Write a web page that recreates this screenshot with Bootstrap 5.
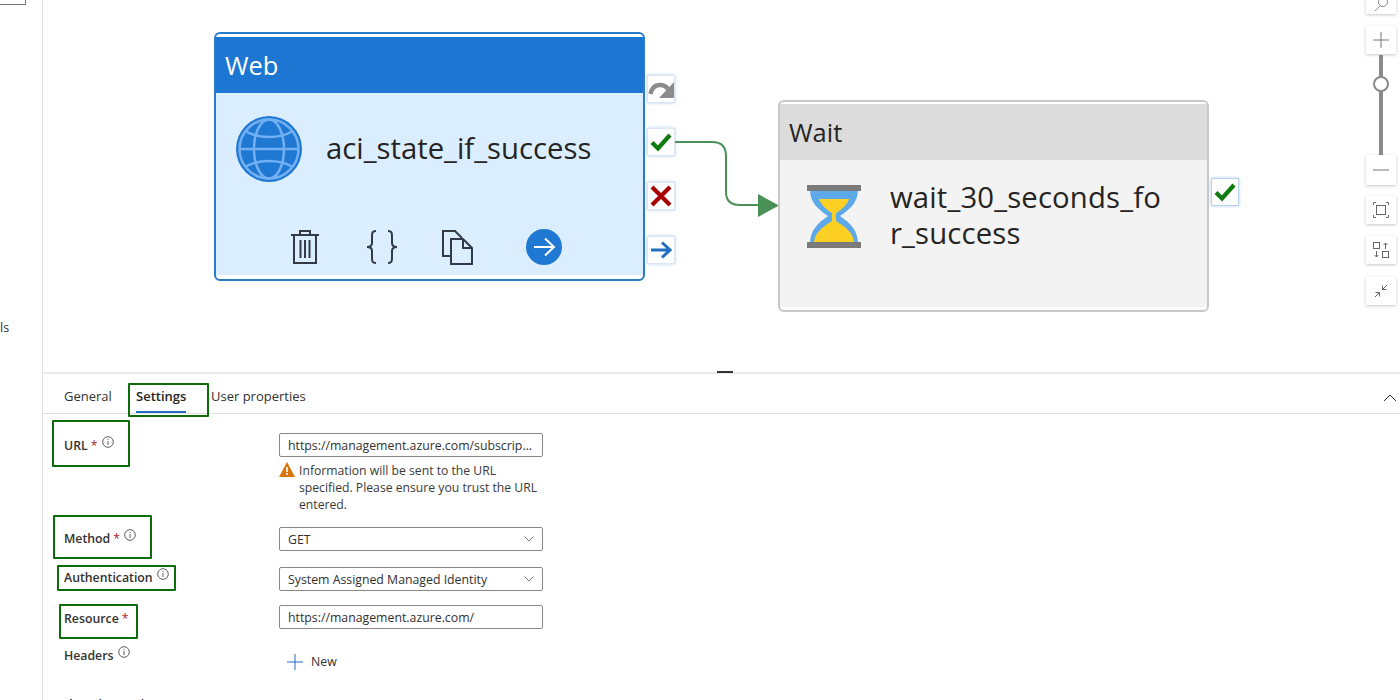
<!DOCTYPE html>
<html lang="en">
<head>
<meta charset="UTF-8">
<meta name="viewport" content="width=device-width, initial-scale=1.0">
<link rel="stylesheet" href="https://cdn.jsdelivr.net/npm/bootstrap@5.3.3/dist/css/bootstrap.min.css">
<script src="https://cdn.jsdelivr.net/npm/bootstrap@5.3.3/dist/js/bootstrap.bundle.min.js" defer></script>
<title>Pipeline editor</title>
<style>
  html, body { height: 700px; overflow: hidden; }
  body { font-family: "Open Sans", "Noto Sans", sans-serif; color: #323130; background: #fff; }

  /* left rail */
  .rail { width: 43px; flex: none; border-right: 1px solid #e1e1e1; }
  .rail-box { width: 26px; height: 6px; margin-top: -1px; border: 1px solid #777; border-left: 0; border-top: 0; }
  .rail-text { margin-top: 315px; font-size: 12.5px; line-height: 16px; }

  /* canvas */
  .canvas { height: 374px; flex: none; border-bottom: 2px solid #e9e9e9; }
  .node { position: absolute; padding: 3px 0 3px; background: #fff; }
  .node-web { left: 171px; top: 32px; width: 431px; height: 249px; border: 2px solid #2a7cc7; border-radius: 6px; }
  .node-wait { left: 735px; top: 100px; width: 431px; height: 212px; padding-top: 2px; border: 2px solid #c8c8c8; border-radius: 6px; }
  .node-head { height: 56px; padding-left: 9px; font-size: 25.5px; line-height: 56px; }
  .node-web .node-head { background: #1d77d2; color: #fff; }
  .node-wait .node-head { background: #dcdcdc; color: #252423; }
  .node-body { position: relative; }
  .node-web .node-body { height: 182px; background: #dbeeff; }
  .node-wait .node-body { height: 147px; background: #f3f3f3; }
  .node-title { color: #252423; font-size: 29.3px; line-height: 36px; }
  .web-main { padding: 23px 0 0 20px; gap: 24px; height: 113px; }
  .web-title { margin-top: 14px; }
  .web-actions { padding-top: 23px; padding-left: 74px; }
  .web-actions svg { display: block; }
  .action-trash { width: 76px; }
  .action-braces { width: 75px; }
  .action-copy { width: 85px; }
  .wait-main { padding: 16px 0 0 27px; gap: 29px; }
  .wait-glass { flex: none; margin-top: 9px; }
  .wait-title { width: 278px; margin-top: 3px; letter-spacing: .15px; overflow-wrap: anywhere; }

  .port { position: absolute; width: 28px; height: 28px; background: #fff; border: 1px solid #dbe6f2; box-shadow: 0 0 3px rgba(120,160,210,.55); }
  .port-skip { left: 604px; top: 75px; }
  .port-ok { left: 604px; top: 128px; }
  .port-fail { left: 604px; top: 182px; }
  .port-done { left: 604px; top: 236px; }
  .port-wait { left: 1168px; top: 178px; border-color: #b9d4f1; }

  .wire { position: absolute; left: 632px; top: 135px; }

  /* zoom toolbar */
  .tool { position: absolute; left: 1323px; width: 30px; background: #fff; box-shadow: 0 1px 3px rgba(0,0,0,.22); }
  .tool-find { top: -16px; height: 30px; }
  .tool-plus { top: 26px; height: 28px; }
  .tool-minus { top: 155px; height: 30px; }
  .tool-fit { top: 196px; height: 28px; }
  .tool-arrange { top: 236px; height: 28px; }
  .tool-collapse { top: 277px; height: 28px; }
  .zoom-track { position: absolute; left: 1336px; top: 55px; width: 4px; height: 100px; background: #8a8a8a; }
  .zoom-knob { position: absolute; left: 1330px; top: 76px; width: 16px; height: 16px; border-radius: 50%; background: #fff; border: 2px solid #8a8a8a; }
  .resize-grip { position: absolute; left: 674px; top: 371px; width: 16px; height: 2px; background: #333; }

  /* bottom panel */
  .panel-tabs { height: 40px; padding-left: 21px; border-bottom: 1px solid #e1e1e1; font-size: 13px; }
  .panel-tabs .nav-link { padding: 4px 0 0; color: #323130; line-height: 36px; height: 39px; }
  .panel-tabs .nav-link.active { color: #252423; font-weight: 600; border-bottom: 2px solid #1f6fbf; }
  .tab-general { width: 72px; }
  .tab-settings { width: 75px; }
  .tab-holder { position: relative; }
  .panel-close { margin-left: auto; margin-right: 3px; padding-top: 13px; }

  .form-area { padding-left: 21px; font-size: 12.3px; }
  .field-row { display: flex; }
  .field-label { position: relative; width: 215px; flex: none; font-weight: 600; color: #323130; font-size: 12.3px; }
  .field-main { width: 264px; flex: none; }
  .field-main .form-control, .field-main .form-select { height: 24px; min-height: 24px; padding: 0 8px; border: 1px solid #8a8886; border-radius: 2px; font-size: 12.3px; line-height: 22px; color: #323130; text-overflow: ellipsis; }
  .field-main .form-select { padding-top: 1px; background-position: right 8px center; background-size: 10px 6px; background-image: url("data:image/svg+xml,%3csvg xmlns='http://www.w3.org/2000/svg' viewBox='0 0 10 6'%3e%3cpath fill='none' stroke='%23807e7c' d='M.5.5L5 5 9.500.5'/%3e%3c/svg%3e"); }
  .row-url { margin-top: 19px; height: 94px; }
  .row-method { height: 40px; }
  .row-auth { height: 38px; }
  .row-resource { height: 40px; }
  .label-url { padding-top: 3px; }
  .label-method { padding-top: 2px; }
  .label-auth { padding-top: 1px; }
  .label-resource { padding-top: 5px; }
  .label-headers { padding-top: 1px; }
  .req { color: #a4262c; margin-left: 3px; font-weight: 400; }
  .info-dot { display: inline-block; vertical-align: 2px; margin-left: 1px; }

  .warn-note { gap: 4px; margin-top: 5px; font-size: 12.2px; line-height: 17px; color: #3b3a39; }
  .warn-note svg { flex: none; margin-top: 0; }

  .new-btn { padding: 8px 0 0 8px; gap: 8px; font-size: 12.3px; color: #323130; }
  .adv-row { margin-top: 25px; padding-left: 3px; gap: 11px; font-weight: 600; line-height: 17px; }
  .adv-row svg { margin-top: 2px; }

  /* green annotation boxes */
  .callout { position: absolute; border: 2px solid #0b6e0b; border-radius: 1px; pointer-events: none; }
  .callout-tab { left: -8px; top: 9px; width: 81px; height: 34px; }
  .callout-url { left: -12px; top: -13px; width: 78px; height: 47px; }
  .callout-method { left: -11px; top: -12px; width: 99px; height: 44px; }
  .callout-auth { left: -7px; top: -2px; width: 119px; height: 26px; }
  .callout-resource { left: -5px; top: -1px; width: 79px; height: 35px; }
</style>
</head>
<body>
<div class="d-flex">
  <!-- left rail -->
  <div class="rail overflow-hidden">
    <div class="rail-box"></div>
    <div class="rail-text">ls</div>
  </div>

  <div class="flex-grow-1">
    <!-- pipeline canvas -->
    <div class="canvas position-relative">
      <div class="node node-web">
        <div class="node-head">Web</div>
        <div class="node-body">
          <div class="web-main d-flex align-items-start">
            <svg width="66" height="66" viewBox="0 0 66 66" fill="none" stroke="#72b0f3" stroke-width="2.500">
              <circle cx="33" cy="33" r="33" fill="#1f78d1" stroke="none"/>
              <circle cx="33" cy="33" r="29.500"/>
              <ellipse cx="33" cy="33" rx="15" ry="29.500"/>
              <path d="M3 33h60M9 15c14 8 34 8 48 0M9 51c14-8 34-8 48 0"/>
            </svg>
            <div class="node-title web-title">aci_state_if_success</div>
          </div>
          <div class="web-actions d-flex">
            <div class="action-trash">
              <svg width="30" height="36" viewBox="0 0 30 36" fill="none" stroke="#323a45" stroke-width="2">
                <path d="M1 6h28M10 6V2h10v4M4 6v28h22V6M10.500 11v18M15 11v18M19.500 11v18"/>
              </svg>
            </div>
            <div class="action-braces">
              <svg width="32" height="36" viewBox="0 0 32 36" fill="none" stroke="#323a45" stroke-width="2">
                <path d="M10 2C6 2 6 4 6 8v6c0 3-2 4-5 4 3 0 5 1 5 4v6c0 4 0 6 4 6M22 2c4 0 4 2 4 6v6c0 3 2 4 5 4-3 0-5 1-5 4v6c0 4 0 6-4 6"/>
              </svg>
            </div>
            <div class="action-copy">
              <svg width="33" height="36" viewBox="0 0 33 36" fill="none" stroke="#323a45" stroke-width="2">
                <path d="M10 27H2V2h12l7 7"/>
                <path d="M10 10h12l9 9v16H10zM22 10v9h9"/>
              </svg>
            </div>
            <div>
              <svg width="36" height="36" viewBox="0 0 36 36" fill="none" stroke="#fff" stroke-width="2">
                <circle cx="18" cy="18" r="18" fill="#1f78d1" stroke="none"/>
                <path d="M8 18h19M19 9.500l9 8.500-9 8.500"/>
              </svg>
            </div>
          </div>
        </div>
      </div>

      <div class="port port-skip d-flex align-items-center justify-content-center">
        <svg width="26" height="20" viewBox="0 0 26 20" fill="none">
          <path d="M2.500 15c2-11 14-12 19-3" stroke="#8c8c8c" stroke-width="4.500"/>
          <path d="M26 3v16H11z" fill="#8c8c8c"/>
        </svg>
      </div>
      <div class="port port-ok d-flex align-items-center justify-content-center">
        <svg width="22" height="20" viewBox="0 0 22 20" fill="none"><path d="M2 10.500l6 6L20 3" stroke="#107c10" stroke-width="4.200"/></svg>
      </div>
      <div class="port port-fail d-flex align-items-center justify-content-center">
        <svg width="22" height="22" viewBox="0 0 22 22" fill="none"><path d="M2 2l18 18M20 2L2 20" stroke="#a80000" stroke-width="4.200"/></svg>
      </div>
      <div class="port port-done d-flex align-items-center justify-content-center">
        <svg width="22" height="18" viewBox="0 0 22 18" fill="none"><path d="M1 9h19M12 1.500L20 9l-8 7.500" stroke="#1f6fbd" stroke-width="3"/></svg>
      </div>

      <!-- connector between web and wait -->
      <svg class="wire" width="105" height="84" viewBox="0 0 105 84" fill="none">
        <path d="M0 7h37c9 0 14 5 14 14v36c0 9 5 13 14 13h20" stroke="#4a9158" stroke-width="2"/>
        <path d="M83 59l21 11.500L83 82z" fill="#4a9158"/>
      </svg>

      <div class="node node-wait">
        <div class="node-head">Wait</div>
        <div class="node-body">
          <div class="wait-main d-flex align-items-start">
            <svg class="wait-glass" width="54" height="63" viewBox="0 0 54 63">
              <path d="M3 4h48c0 14-8 20-18 27 10 7 18 14 18 28H3c0-14 8-21 18-28C11 24 3 18 3 4z" fill="#5ea9ea"/>
              <path d="M12 14h30c-2 6-8 11-13 14v8c8 5 17 11 18 21H7c1-10 10-16 18-21v-8c-5-3-11-8-13-14z" fill="#ffd024"/>
              <rect width="54" height="6" fill="#7a7a7a"/>
              <rect y="57" width="54" height="6" fill="#7a7a7a"/>
            </svg>
            <div class="node-title wait-title">wait_30_seconds_for_success</div>
          </div>
        </div>
      </div>
      <div class="port port-wait d-flex align-items-center justify-content-center">
        <svg width="22" height="20" viewBox="0 0 22 20" fill="none"><path d="M2 10.500l6 6L20 3" stroke="#107c10" stroke-width="4.200"/></svg>
      </div>

      <!-- zoom toolbar -->
      <div class="tool tool-find d-flex align-items-end justify-content-center">
        <svg width="16" height="14" viewBox="0 0 16 14" fill="none" stroke="#8a8a8a"><circle cx="10" cy="2" r="4.500"/><path d="M7 6l-5 5"/></svg>
      </div>
      <div class="tool tool-plus d-flex align-items-center justify-content-center">
        <svg width="16" height="16" viewBox="0 0 16 16" stroke="#777"><path d="M0 8h16M8 0v16"/></svg>
      </div>
      <div class="zoom-track"></div>
      <div class="zoom-knob"></div>
      <div class="tool tool-minus d-flex align-items-center justify-content-center">
        <svg width="16" height="2" viewBox="0 0 16 2" stroke="#777"><path d="M0 1h16"/></svg>
      </div>
      <div class="tool tool-fit d-flex align-items-center justify-content-center">
        <svg width="16" height="16" viewBox="0 0 16 16" fill="none" stroke="#666"><rect x="3.500" y="3.500" width="9" height="9"/><path d="M.5 3V.5H3M13 .5h2.500V3M15.500 13v2.500H13M3 15.500H.5V13"/></svg>
      </div>
      <div class="tool tool-arrange d-flex align-items-center justify-content-center">
        <svg width="16" height="16" viewBox="0 0 16 16" fill="none" stroke="#666"><rect x=".5" y=".5" width="6" height="6"/><rect x="9.500" y="9.500" width="6" height="6"/><path d="M12.500 7V1M10.500 3l2-2 2 2M3.500 9v6M1.500 13l2 2 2-2"/></svg>
      </div>
      <div class="tool tool-collapse d-flex align-items-center justify-content-center">
        <svg width="14" height="14" viewBox="0 0 14 14" fill="none" stroke="#666"><path d="M13 1L8.500 5.500M8.500 1.500v4h4M1 13l4.500-4.500M5.500 12.500v-4h-4"/></svg>
      </div>
      <div class="resize-grip"></div>
    </div>

    <!-- bottom panel -->
    <div class="panel-tabs nav d-flex align-items-start">
      <div class="tab-general"><a class="nav-link" href="#">General</a></div>
      <div class="tab-settings tab-holder">
        <a class="nav-link active d-inline-block" href="#">Settings</a>
        <span class="callout callout-tab"></span>
      </div>
      <div><a class="nav-link" href="#">User properties</a></div>
      <div class="panel-close">
        <svg width="14" height="14" viewBox="0 0 14 14" fill="none" stroke="#323130"><path d="M1 10l6-6 6 6"/></svg>
      </div>
    </div>

    <div class="form-area">
      <div class="field-row row-url">
        <div class="field-label label-url">URL<span class="req">*</span>
          <svg class="info-dot" width="12" height="12" viewBox="0 0 12 12" fill="none" stroke="#605e5c"><circle cx="6" cy="6" r="5.300"/><path d="M6 5v4M6 3v1"/></svg>
          <span class="callout callout-url"></span>
        </div>
        <div class="field-main">
          <input class="form-control" type="text" value="https://management.azure.com/subscriptions/0000/resourceGroups" readonly>
          <div class="warn-note d-flex">
            <svg width="16" height="15" viewBox="0 0 16 15"><path d="M8 0l8 15H0z" fill="#d9730d"/><path d="M8 5v5M8 11v2" stroke="#fff" stroke-width="1.600"/></svg>
            <div>Information will be sent to the URL specified. Please ensure you trust the URL entered.</div>
          </div>
        </div>
      </div>
      <div class="field-row row-method">
        <div class="field-label label-method">Method<span class="req">*</span>
          <svg class="info-dot" width="12" height="12" viewBox="0 0 12 12" fill="none" stroke="#605e5c"><circle cx="6" cy="6" r="5.300"/><path d="M6 5v4M6 3v1"/></svg>
          <span class="callout callout-method"></span>
        </div>
        <div class="field-main">
          <select class="form-select"><option>GET</option></select>
        </div>
      </div>
      <div class="field-row row-auth">
        <div class="field-label label-auth">Authentication
          <svg class="info-dot" width="12" height="12" viewBox="0 0 12 12" fill="none" stroke="#605e5c"><circle cx="6" cy="6" r="5.300"/><path d="M6 5v4M6 3v1"/></svg>
          <span class="callout callout-auth"></span>
        </div>
        <div class="field-main">
          <select class="form-select"><option>System Assigned Managed Identity</option></select>
        </div>
      </div>
      <div class="field-row row-resource">
        <div class="field-label label-resource">Resource<span class="req">*</span>
          <span class="callout callout-resource"></span>
        </div>
        <div class="field-main">
          <input class="form-control" type="text" value="https://management.azure.com/" readonly>
        </div>
      </div>
      <div class="field-row">
        <div class="field-label label-headers">Headers
          <svg class="info-dot" width="12" height="12" viewBox="0 0 12 12" fill="none" stroke="#605e5c"><circle cx="6" cy="6" r="5.300"/><path d="M6 5v4M6 3v1"/></svg>
        </div>
        <div class="field-main">
          <div class="new-btn d-flex align-items-center">
            <svg width="16" height="16" viewBox="0 0 16 16" stroke="#1f6fbf"><path d="M0 8h16M8 0v16"/></svg>
            <span>New</span>
          </div>
        </div>
      </div>
      <div class="adv-row d-flex align-items-start">
        <svg width="8" height="6" viewBox="0 0 8 6" fill="none" stroke="#444"><path d="M.5 5L4 1l3.500 4"/></svg>
        <span>Advanced</span>
      </div>
    </div>
  </div>
</div>
</body>
</html>
